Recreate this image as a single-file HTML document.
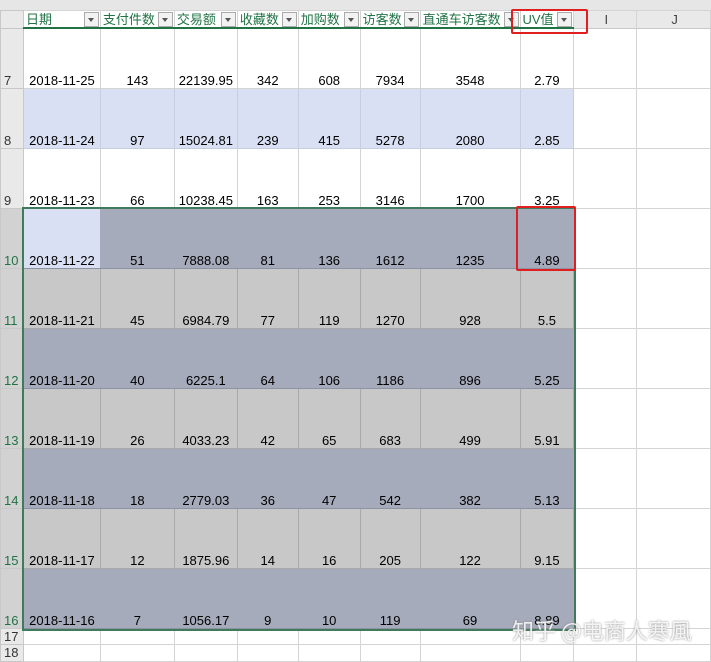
<!DOCTYPE html><html><head><meta charset="utf-8"><style>
body{margin:0;width:711px;height:662px;overflow:hidden;background:#fff;font-family:"Liberation Sans","Noto Sans CJK SC",sans-serif;position:relative}
.top{position:absolute;left:0;top:0;width:711px;height:10px;background:#e6e6e6;border-bottom:1px solid #c8c8c8}
table{position:absolute;left:0;top:10px;border-collapse:collapse;table-layout:fixed}
td{border:1px solid #d4d4d4;padding:0;font-size:13px;text-align:center;vertical-align:bottom;color:#000;white-space:nowrap;overflow:hidden}
td.rh{background:#e9e9e9;color:#333;text-align:left;padding-left:3px;border-color:#c8c8c8;font-size:13px}
tr.sel td.rh{background:#d2d2d2;color:#217346}
tr.h td{height:16px;line-height:15px;vertical-align:middle;color:#217346;font-size:13px;text-align:left;padding:0 0 0 2px;border-bottom:2px solid #217346;position:relative}
tr.h td.rh{background:#e9e9e9;border-bottom:1px solid #c8c8c8}
tr.h td.c{text-align:center;color:#444;background:#e9e9e9;border-bottom:1px solid #c8c8c8}
.dd{position:absolute;right:1px;top:1px;width:13px;height:13px;border:1px solid #aaa;background:#f2f2f2}
.dd:after{content:"";position:absolute;left:3px;top:5px;border-left:3.5px solid transparent;border-right:3.5px solid transparent;border-top:4px solid #555}
tr.r td{height:59px}
tr.l td.d{background:#dae0f3;border-color:#c9cde0}
tr.s td.d{background:#a6abbb;border-color:#a6abbb;border-bottom-color:#8e93a3}
tr.g td.d{background:#c8c8c8;border-color:#a9a9a9}
tr.s td.d.a{background:#dae0f3}
tr.t td{height:15px;line-height:15px}
tr.t2 td{height:16px;line-height:16px}
.box{position:absolute;border:2px solid #3f7a5a}
.red{position:absolute;border:2px solid #e02020;border-radius:2px}
.wm{position:absolute;left:512px;top:614px;font-size:22px;color:rgba(255,255,255,.85);text-shadow:0 0 2px #888;font-family:"Noto Sans CJK SC",sans-serif}
</style></head><body>
<div class="top"></div>
<table>
<colgroup><col style="width:23px"><col style="width:77px"><col style="width:74px"><col style="width:63px"><col style="width:61px"><col style="width:62px"><col style="width:60px"><col style="width:100px"><col style="width:54px"><col style="width:63px"><col style="width:74px"></colgroup>
<tr class="h"><td class="rh"></td><td>日期<span class="dd"></span></td><td>支付件数<span class="dd"></span></td><td>交易额<span class="dd"></span></td><td>收藏数<span class="dd"></span></td><td>加购数<span class="dd"></span></td><td>访客数<span class="dd"></span></td><td>直通车访客数<span class="dd"></span></td><td>UV值<span class="dd"></span></td><td class="c">I</td><td class="c">J</td></tr>
<tr class="r"><td class="rh">7</td><td>2018-11-25</td><td>143</td><td>22139.95</td><td>342</td><td>608</td><td>7934</td><td>3548</td><td>2.79</td><td></td><td></td></tr>
<tr class="r l"><td class="rh">8</td><td class="d">2018-11-24</td><td class="d">97</td><td class="d">15024.81</td><td class="d">239</td><td class="d">415</td><td class="d">5278</td><td class="d">2080</td><td class="d">2.85</td><td></td><td></td></tr>
<tr class="r"><td class="rh">9</td><td>2018-11-23</td><td>66</td><td>10238.45</td><td>163</td><td>253</td><td>3146</td><td>1700</td><td>3.25</td><td></td><td></td></tr>
<tr class="r s sel"><td class="rh">10</td><td class="d a">2018-11-22</td><td class="d">51</td><td class="d">7888.08</td><td class="d">81</td><td class="d">136</td><td class="d">1612</td><td class="d">1235</td><td class="d">4.89</td><td></td><td></td></tr>
<tr class="r g sel"><td class="rh">11</td><td class="d">2018-11-21</td><td class="d">45</td><td class="d">6984.79</td><td class="d">77</td><td class="d">119</td><td class="d">1270</td><td class="d">928</td><td class="d">5.5</td><td></td><td></td></tr>
<tr class="r s sel"><td class="rh">12</td><td class="d">2018-11-20</td><td class="d">40</td><td class="d">6225.1</td><td class="d">64</td><td class="d">106</td><td class="d">1186</td><td class="d">896</td><td class="d">5.25</td><td></td><td></td></tr>
<tr class="r g sel"><td class="rh">13</td><td class="d">2018-11-19</td><td class="d">26</td><td class="d">4033.23</td><td class="d">42</td><td class="d">65</td><td class="d">683</td><td class="d">499</td><td class="d">5.91</td><td></td><td></td></tr>
<tr class="r s sel"><td class="rh">14</td><td class="d">2018-11-18</td><td class="d">18</td><td class="d">2779.03</td><td class="d">36</td><td class="d">47</td><td class="d">542</td><td class="d">382</td><td class="d">5.13</td><td></td><td></td></tr>
<tr class="r g sel"><td class="rh">15</td><td class="d">2018-11-17</td><td class="d">12</td><td class="d">1875.96</td><td class="d">14</td><td class="d">16</td><td class="d">205</td><td class="d">122</td><td class="d">9.15</td><td></td><td></td></tr>
<tr class="r s sel"><td class="rh">16</td><td class="d">2018-11-16</td><td class="d">7</td><td class="d">1056.17</td><td class="d">9</td><td class="d">10</td><td class="d">119</td><td class="d">69</td><td class="d">8.89</td><td></td><td></td></tr>
<tr class="t"><td class="rh">17</td><td></td><td></td><td></td><td></td><td></td><td></td><td></td><td></td><td></td><td></td></tr>
<tr class="t2"><td class="rh">18</td><td></td><td></td><td></td><td></td><td></td><td></td><td></td><td></td><td></td><td></td></tr>
</table>
<div class="box" style="left:22px;top:207px;width:550px;height:420px"></div>
<div class="red" style="left:511px;top:9px;width:73px;height:21px"></div>
<div class="red" style="left:516px;top:206px;width:56px;height:61px"></div>
<div class="wm">知乎 @电商人寒風</div>
</body></html>
